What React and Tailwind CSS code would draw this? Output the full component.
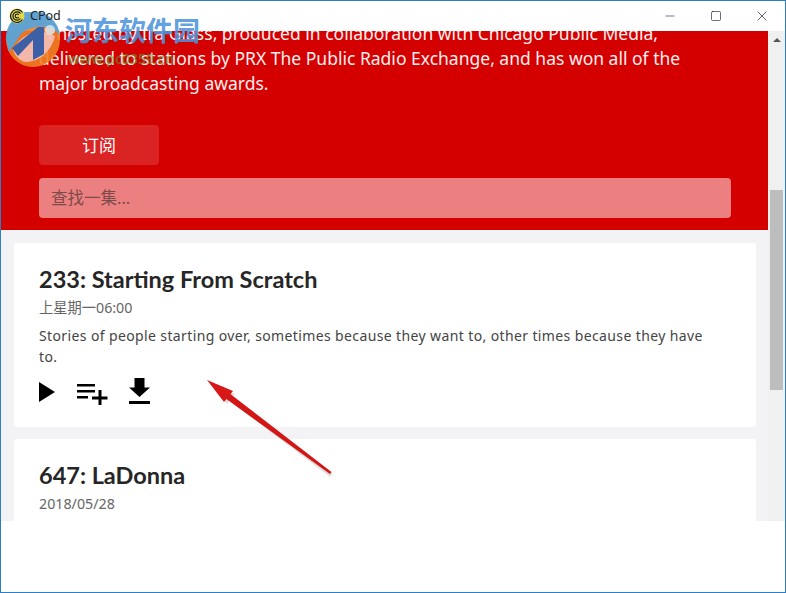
import React from "react";
import { Minus, Square, X } from "lucide-react";

const font = "font-['Noto_Sans','Noto_Sans_CJK_SC',sans-serif]";

function AppLogo() {
  return (
    <svg width="16" height="16" viewBox="0 0 16 16" fill="none">
      <circle cx="8" cy="8" r="7.5" fill="#e2d84a" />
      <path d="M13.5 4.5A6.5 6.5 0 1 0 13.5 11.5" stroke="#1c1c1c" strokeWidth="1.2" />
      <path d="M11.5 5.5A4.2 4.2 0 1 0 11.5 10.5" stroke="#1c1c1c" strokeWidth="1.2" />
      <path d="M9.8 6.8A2 2 0 1 0 9.8 9.2" stroke="#1c1c1c" strokeWidth="1.1" />
    </svg>
  );
}

function TitleBar() {
  return (
    <div className="h-[30px] flex items-center bg-white">
      <div className="relative z-10 flex items-center pl-2 gap-[5px] flex-1">
        <AppLogo />
        <span className="text-[12.5px] text-[#222]">CPod</span>
      </div>
      <div className="w-[46px] flex justify-center"><Minus size={14} strokeWidth={1} color="#111" /></div>
      <div className="w-[46px] flex justify-center"><Square size={12} strokeWidth={1.2} color="#111" /></div>
      <div className="w-[46px] flex justify-center"><X size={16} strokeWidth={1} color="#111" /></div>
    </div>
  );
}

function PlayIcon() {
  return (
    <svg width="16" height="20" viewBox="0 0 16 20"><path d="M0 0L16 10L0 20Z" fill="#000" /></svg>
  );
}

function QueueIcon() {
  return (
    <svg width="31" height="21" viewBox="0 0 31 21">
      <path d="M0 0H18V2.6H0ZM0 6H18V8.6H0ZM0 12H11V14.6H0ZM21.5 6H24.5V12.5H30.5V15.5H24.5V21H21.5V15.5H15V12.5H21.5Z" fill="#000" />
    </svg>
  );
}

function DownloadIcon() {
  return (
    <svg width="21" height="26" viewBox="0 0 21 26">
      <path d="M5.5 0H15.5V9.5H21L10.5 19L0 9.5H5.5ZM0 23H21V26H0Z" fill="#000" />
    </svg>
  );
}

function EpisodeCard({ title, date, desc, actions }) {
  return (
    <div className="bg-white rounded-[3px] pl-[25px] pr-[40px] pt-[18px] pb-[22px] shrink-0">
      <h2 className="text-[23.5px] leading-[36px] font-bold text-[#262626] font-['Lato',sans-serif]">{title}</h2>
      <p className="text-[14.25px] leading-[20px] mt-[1px] text-[#666]">{date}</p>
      {desc && <p className="text-sm leading-[21px] mt-[7px] text-[#444] tracking-[0.38px]">{desc}</p>}
      {actions && (
        <div className="flex items-center mt-[12px] h-[26px]">
          <PlayIcon />
          <div className="ml-[22px] mt-[4px] flex"><QueueIcon /></div>
          <div className="ml-[21px] mb-[2px] flex"><DownloadIcon /></div>
        </div>
      )}
    </div>
  );
}

function Hero() {
  return (
    <div className="h-[199px] bg-[#d40000] flex flex-col justify-end pl-[38px] pr-[37px] pb-[12px] overflow-hidden shrink-0">
      <p className="text-[17.5px] leading-[25px] text-[#fdeeee] shrink-0">
        is hosted by Ira Glass, produced in collaboration with Chicago Public Media,
        <br />
        delivered to stations by PRX The Public Radio Exchange, and has won all of the
        <br />
        major broadcasting awards.
      </p>
      <button className="mt-[29px] w-[120px] h-[40px] shrink-0 rounded bg-[#da2424] text-white text-[17px] pt-[1px]">订阅</button>
      <div className="mt-[13px] h-[40px] shrink-0 rounded bg-[#ec8080] flex items-center px-3 text-[16.5px] text-[#7c4a4a]">查找一集...</div>
    </div>
  );
}

function Scrollbar() {
  return (
    <div className="w-[17px] bg-[#f0f0f0] flex flex-col items-center shrink-0">
      <div className="h-[159px] w-full flex justify-center pt-[7px]">
        <div className="w-0 h-0 border-l-[4px] border-r-[4px] border-b-[4px] border-l-transparent border-r-transparent border-b-[#555]" />
      </div>
      <div className="h-[200px] w-[13px] bg-[#bdbdbd]" />
    </div>
  );
}

// watermark and arrow sit on top of the screenshot
function Watermark() {
  return (
    <div className="absolute left-[4px] top-[11px] pointer-events-none">
      <svg width="58" height="56" viewBox="0 0 58 56" className="absolute left-0 top-0">
        <circle cx="28" cy="28" r="27" fill="#ee7f24" fillOpacity="0.9" />
        <path d="M1 28A27 27 0 0 1 55 24C50 14 30 10 16 22L4 40Z" fill="#5aa3d8" fillOpacity="0.95" />
        <path d="M8 38C14 24 32 14 50 24C46 40 34 50 20 50C14 48 10 44 8 38Z" fill="#f5c0ba" fillOpacity="0.9" />
        <path d="M7 36L33 15L39 15V42L28 48V28L13 44Z" fill="#3d5fa6" />
        <circle cx="45" cy="18" r="5" fill="#dcecf8" fillOpacity="0.8" />
      </svg>
      <span className="absolute left-[60px] top-[1px] whitespace-nowrap text-[27px] leading-[36px] font-bold text-[#4d94dc]/90">河东软件园</span>
      <span className="absolute left-[63px] top-[37px] whitespace-nowrap text-sm font-semibold text-[#5f9a2e]/60">www.pc0359.cn</span>
    </div>
  );
}

function Arrow() {
  return (
    <svg width="150" height="110" viewBox="0 0 150 110" className="absolute left-[200px] top-[370px] pointer-events-none">
      <path d="M130 104L32 30" stroke="#888" strokeOpacity="0.3" strokeWidth="4" />
      <path d="M7 10L32 20L24 30Z" fill="#888" fillOpacity="0.3" transform="translate(2 3)" />
      <path d="M130.5 101L129 103L24 27L28 22Z" fill="#d21616" />
      <path d="M6 9L32 20L23 31Z" fill="#d81818" />
    </svg>
  );
}

export default function App() {
  return (
    <div className={`relative w-[786px] h-[593px] bg-white border border-[#2b7fc9] overflow-hidden flex flex-col ${font}`}>
      <TitleBar />
      <div className="h-[490px] flex overflow-hidden">
        <div className="flex-1 bg-[#f3f3f5] flex flex-col overflow-hidden">
          <Hero />
          <div className="flex flex-col gap-[12px] pl-[13px] pr-[12px] pt-[13px]">
            <EpisodeCard
              title="233: Starting From Scratch"
              date="上星期一06:00"
              desc="Stories of people starting over, sometimes because they want to, other times because they have to."
              actions
            />
            <EpisodeCard title="647: LaDonna" date="2018/05/28" />
          </div>
        </div>
        <Scrollbar />
      </div>
      <Watermark />
      <Arrow />
    </div>
  );
}
